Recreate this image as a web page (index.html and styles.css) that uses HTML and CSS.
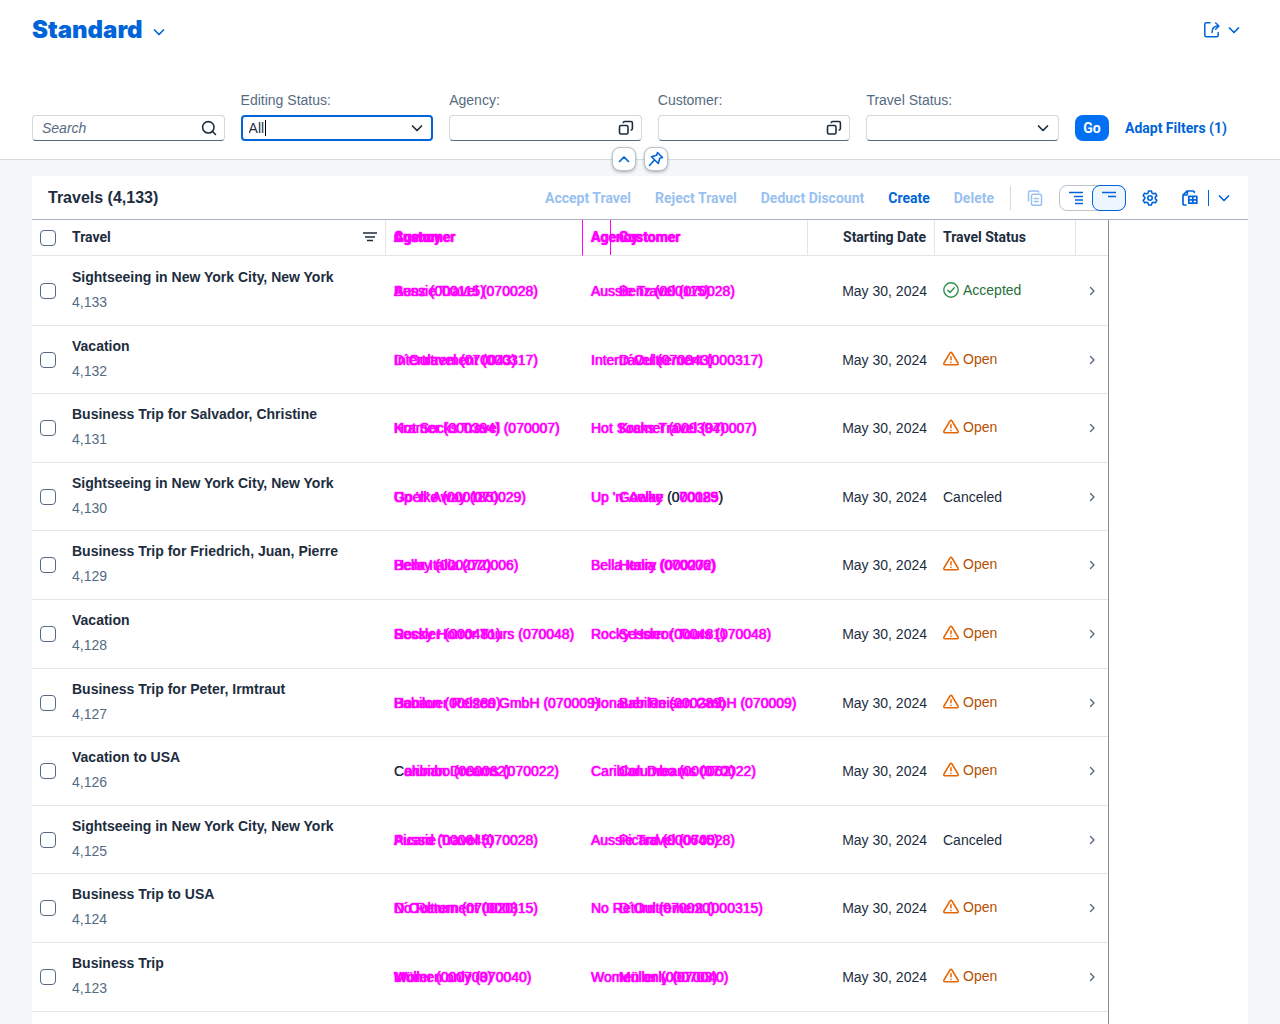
FILE: index.html
```html
<!DOCTYPE html>
<html lang="en">
<head>
<meta charset="utf-8">
<title>Travels</title>
<link rel="stylesheet" href="styles.css">
</head>
<body>
<svg class="sprite" aria-hidden="true">
  <symbol id="down" viewBox="0 0 16 16"><path d="M3.5 6 8 10.5 12.500 6" fill="none" stroke="currentColor" stroke-width="1.700" stroke-linecap="round" stroke-linejoin="round"/></symbol>
  <symbol id="up" viewBox="0 0 16 16"><path d="M3.500 10.500 8 6l4.500 4.500" fill="none" stroke="currentColor" stroke-width="1.700" stroke-linecap="round" stroke-linejoin="round"/></symbol>
  <symbol id="right" viewBox="0 0 16 16"><path d="m6.500 4.500 3.500 3.500-3.500 3.500" fill="none" stroke="currentColor" stroke-width="1.400" stroke-linecap="round" stroke-linejoin="round"/></symbol>
  <symbol id="search" viewBox="0 0 16 16"><g fill="none" stroke="currentColor" stroke-width="1.600" stroke-linecap="round"><circle cx="7.300" cy="7.300" r="5.700"/><path d="m11.500 11.500 3 3"/></g></symbol>
  <symbol id="valuehelp" viewBox="0 0 16 16"><g fill="none" stroke="currentColor" stroke-width="1.600" stroke-linecap="round" stroke-linejoin="round"><rect x="1.500" y="5.500" width="8.500" height="8.500" rx="1.500"/><path d="M5.300 2.500q.3-1 1.300-1h6.300q1.500 0 1.500 1.500v5.500q0 1.300-1.200 1.500"/></g></symbol>
  <symbol id="share" viewBox="0 0 16 16"><g fill="none" stroke="currentColor" stroke-width="1.500" stroke-linecap="round" stroke-linejoin="round"><path d="M6 .8H2.300Q.8.800.8 2.300v10.900q0 1.500 1.500 1.500h10.400q1.500 0 1.500-1.500V10.500"/><path d="M8 10.500c0-3.500 1.500-6.500 6.500-6.500M11.700 1l3.200 3-3.200 3.200"/></g></symbol>
  <symbol id="pin" viewBox="0 0 16 16"><path d="m9.500 1.500 5 5-2.700.8-1.500 5.200-6.800-6.800 5.200-1.500zM6 9.500l-4.500 5" fill="none" stroke="currentColor" stroke-width="1.600" stroke-linecap="round" stroke-linejoin="round"/></symbol>
  <symbol id="copy" viewBox="0 0 16 16"><g fill="none" stroke="currentColor" stroke-width="1.500" stroke-linecap="round" stroke-linejoin="round"><path d="M1.500 11V2.500q0-1.500 1.500-1.500h7.500q1 0 1.200 1"/><rect x="4.500" y="4.200" width="10" height="11" rx="1.800"/><path d="M7.200 8.500h4M7.200 11.500h4"/></g></symbol>
  <symbol id="expand" viewBox="0 0 16 16"><path d="M1 2.500h14M6 6.500h9M7 10h8M7 13.500h8" fill="none" stroke="currentColor" stroke-width="1.600"/></symbol>
  <symbol id="collapse" viewBox="0 0 16 16"><path d="M1 2.500h14M7 6.500h8" fill="none" stroke="currentColor" stroke-width="1.600"/></symbol>
  <symbol id="gear" viewBox="0 0 16 16"><g fill="none" stroke="currentColor" stroke-width="1.600" stroke-linejoin="round"><path d="M6.600 1h2.800l.6 2.100 1.300.7 2.100-.6 1.400 2.400L13.300 7.200v1.600l1.500 1.600-1.400 2.400-2.100-.6-1.300.7-.6 2.100H6.600L6 12.900l-1.300-.7-2.100.6-1.400-2.400 1.500-1.600V7.200L1.200 5.600l1.400-2.400 2.100.6L6 3.100z"/><circle cx="8" cy="8" r="2.200"/></g></symbol>
  <symbol id="sheet" viewBox="0 0 16 16"><g fill="none" stroke="currentColor" stroke-width="1.700" stroke-linecap="round" stroke-linejoin="round"><path d="M4 15H2.300q-1.300 0-1.300-1.300V5L5 1h6q1.300 0 1.300 1.300M5.300 1.500V4q0 1-1 1H1.500"/><path d="M6.800 6.300h8v6.900h-8zM10.800 6.300v7M6.800 9.800h8"/></g></symbol>
  <symbol id="filter" viewBox="0 0 16 16"><path d="M1 4h14M3 8h10M5 11.500h6" fill="none" stroke="currentColor" stroke-width="1.600"/></symbol>
  <symbol id="ok" viewBox="0 0 16 16"><g fill="none" stroke="currentColor" stroke-width="1.400" stroke-linecap="round" stroke-linejoin="round"><circle cx="8" cy="8" r="7.200"/><path d="m4.800 8.300 2.200 2.200 4.300-4.700"/></g></symbol>
  <symbol id="warn" viewBox="0 0 16 16"><g fill="none" stroke="currentColor" stroke-width="1.500" stroke-linecap="round" stroke-linejoin="round"><path d="M7 2q1-1.500 2 0l6 10q.7 1.700-1 1.700H2q-1.700 0-1-1.700z"/><path d="M8 5.800v3M8 11.200v.2"/></g></symbol>
</svg>

<header class="page-header">
  <div class="title-bar">
    <h1><button class="variant" type="button">Standard <svg class="icon"><use href="#down"/></svg></button></h1>
    <button class="share" type="button" aria-label="Share"><svg class="icon"><use href="#share"/></svg><svg class="icon"><use href="#down"/></svg></button>
  </div>
  <form class="filters">
    <div class="field">
      <div class="box"><input type="search" aria-label="Search" placeholder="Search"><svg class="icon"><use href="#search"/></svg></div>
    </div>
    <div class="field">
      <label for="editing">Editing Status:</label>
      <div class="box focused"><select id="editing"><option>All</option></select><span class="caret"></span><svg class="icon"><use href="#down"/></svg></div>
    </div>
    <div class="field">
      <label for="agency">Agency:</label>
      <div class="box"><input id="agency" type="text"><svg class="icon"><use href="#valuehelp"/></svg></div>
    </div>
    <div class="field">
      <label for="customer">Customer:</label>
      <div class="box"><input id="customer" type="text"><svg class="icon"><use href="#valuehelp"/></svg></div>
    </div>
    <div class="field">
      <label for="status">Travel Status:</label>
      <div class="box"><select id="status"><option></option></select><svg class="icon"><use href="#down"/></svg></div>
    </div>
    <div class="filter-actions">
      <button class="go" type="button">Go</button>
      <button class="adapt" type="button">Adapt Filters (1)</button>
    </div>
  </form>
  <div class="header-toggles">
    <button type="button" aria-label="Collapse header"><svg class="icon"><use href="#up"/></svg></button>
    <button type="button" aria-label="Pin header"><svg class="icon"><use href="#pin"/></svg></button>
  </div>
</header>

<main class="panel">
  <div class="toolbar">
    <h2>Travels (4,133)</h2>
    <button type="button" disabled>Accept Travel</button>
    <button type="button" disabled>Reject Travel</button>
    <button type="button" disabled>Deduct Discount</button>
    <button type="button">Create</button>
    <button type="button" disabled>Delete</button>
    <span class="separator"></span>
    <button type="button" disabled aria-label="Copy"><svg class="icon"><use href="#copy"/></svg></button>
    <div class="segmented">
      <button type="button" aria-label="Show more"><svg class="icon"><use href="#expand"/></svg></button>
      <button class="selected" type="button" aria-label="Show less"><svg class="icon"><use href="#collapse"/></svg></button>
    </div>
    <button class="settings" type="button" aria-label="Settings"><svg class="icon"><use href="#gear"/></svg></button>
    <div class="export">
      <button type="button" aria-label="Export"><svg class="icon"><use href="#sheet"/></svg></button>
      <button type="button" aria-label="Export options"><svg class="icon"><use href="#down"/></svg></button>
    </div>
  </div>
  <div class="table-area">
    <table>
      <colgroup><col class="c-check"><col class="c-travel"><col class="c-first"><col class="c-second"><col class="c-date"><col class="c-status"><col class="c-nav"></colgroup>
      <thead>
        <tr>
          <th><input type="checkbox" aria-label="Select all"></th>
          <th><div class="head-travel">Travel <svg class="icon"><use href="#filter"/></svg></div></th>
          <th class="mark-edge"><div class="stack"><span>Agency</span><span>Customer</span></div></th>
          <th class="mark-line"><div class="stack shifted"><span>Agency</span><span>Customer</span></div></th>
          <th class="date">Starting Date</th>
          <th>Travel Status</th>
          <th></th>
        </tr>
      </thead>
      <tbody id="rows"></tbody>
    </table>
  </div>
</main>
<script src="app.js"></script>
</body>
</html>
```

FILE: styles.css
```css
* { box-sizing: border-box; }

body {
  margin: 0;
  height: 100vh;
  overflow: hidden;
  display: flex;
  flex-direction: column;
  background: #f5f6f7;
  color: #1d2d3e;
  font: 14px/20px "Liberation Sans", Arial, sans-serif;
}

.sprite { display: none; }
.icon { width: 16px; height: 16px; flex: none; display: block; }

button, input, select { font: inherit; color: inherit; }
button {
  border: 0;
  padding: 0;
  background: none;
  color: #0064d9;
  font-family: Roboto, sans-serif;
  font-weight: 700;
}
button:disabled { color: #99c1f0; }

/* Header */
.page-header {
  position: relative;
  flex: none;
  height: 160px;
  padding: 14px 32px 0;
  background: #fff;
  border-bottom: 1px solid #d9d9d9;
}
.title-bar {
  display: flex;
  justify-content: space-between;
  align-items: center;
  height: 32px;
}
h1 { margin: 0; }
.variant {
  display: flex;
  align-items: center;
  gap: 8px;
  font: 900 24px/32px Inter, sans-serif;
}
.variant .icon { margin-top: 4px; }
.share { display: flex; gap: 6px; margin-right: 6px; }

.filters {
  display: grid;
  grid-template-columns: repeat(5, 1fr) 173px;
  column-gap: 16px;
  align-items: end;
  margin-top: 44px;
}
.field label { display: block; color: #556b82; margin-bottom: 5px; }
.box { position: relative; }
.box input, .box select {
  display: block;
  appearance: none;
  width: 100%;
  height: 26px;
  padding: 0 32px 0 9px;
  border: 1px solid #d3d7dc;
  border-bottom-color: #556b82;
  border-radius: 4px;
  background: #fff;
  outline: none;
}
.box input::placeholder { color: #556b82; font-style: italic; opacity: 1; }
.box .icon { position: absolute; right: 8px; top: 5px; pointer-events: none; }
.box.focused select { border: 2px solid #0064d9; padding-left: 6px; }
.caret { position: absolute; left: 24px; top: 5px; width: 1px; height: 16px; background: #000; }

.filter-actions { display: flex; gap: 16px; }
.go {
  width: 34px;
  height: 26px;
  border-radius: 8px;
  background: #0070f2;
  color: #fff;
}
.adapt { white-space: nowrap; }

.header-toggles {
  position: absolute;
  left: 0;
  right: 0;
  bottom: -12px;
  display: flex;
  justify-content: center;
  gap: 8px;
}
.header-toggles button {
  display: grid;
  place-items: center;
  width: 24px;
  height: 24px;
  border: 1px solid #bcc3ca;
  border-radius: 8px;
  background: #fff;
  box-shadow: 0 1px 3px #5b738b88;
}

/* Table panel */
.panel {
  flex: 1;
  min-height: 0;
  display: flex;
  flex-direction: column;
  margin: 16px 32px 0;
  background: #fff;
}
.toolbar {
  flex: none;
  display: flex;
  align-items: center;
  gap: 24px;
  height: 44px;
  padding: 0 16px;
  border-bottom: 1px solid #a8b3bd;
}
h2 { margin: 0 auto 0 0; font-size: 16px; line-height: 20px; }
.separator { width: 1px; height: 24px; margin: 0 -8px; background: #d3d7dc; }
.segmented {
  display: flex;
  width: 67px;
  height: 26px;
  margin: 0 -8px;
  border: 1px solid #bcc3ca;
  border-radius: 8px;
}
.segmented button { flex: 1; display: grid; place-items: center; }
.segmented .selected {
  margin: -1px;
  border: 1px solid #0064d9;
  border-radius: 8px;
  background: #edf6ff;
}
.export { display: flex; align-items: center; }
.export button + button { margin-left: 10px; padding-left: 7px; border-left: 1px solid #0064d9; }

.table-area { flex: 1; width: 1077px; border-right: 1px solid #8c8f94; }
table { width: 100%; table-layout: fixed; border-collapse: separate; border-spacing: 0; }
.c-check { width: 40px; }
.c-travel { width: 314px; }
.c-first { width: 197px; }
.c-second { width: 225px; }
.c-date { width: 127px; }
.c-status { width: 141px; }

th, td { padding: 0; text-align: left; border-bottom: 1px solid #e5e5e5; }
th {
  height: 36px;
  padding-bottom: 2px;
  border-right: 1px solid #e5e5e5;
  font-family: Roboto, sans-serif;
}
th:nth-child(1), th:nth-child(7) { border-right: 0; }
th:nth-child(n+3), td:nth-child(n+3) { padding-left: 8px; }
th.date, td.date { padding-right: 8px; text-align: right; }
.head-travel { display: flex; justify-content: space-between; align-items: center; padding-right: 7px; }

tbody tr { height: 69px; }
tbody tr:first-child { height: 70px; }
tbody tr:nth-child(5n+2), tbody tr:nth-child(5n+4) { height: 68px; }

input[type="checkbox"] {
  display: block;
  appearance: none;
  width: 16px;
  height: 16px;
  margin: 0 0 0 8px;
  border: 1px solid #556b82;
  border-radius: 4px;
  background: #fff;
}
th input[type="checkbox"] { margin-top: 3px; }

.travel { display: flex; flex-direction: column; gap: 5px; padding-bottom: 3px; }
.travel span { color: #556b82; }

/* Two versions of a column drawn over each other, changes marked in magenta */
.stack {
  display: grid;
  color: #f0f;
  white-space: nowrap;
  text-shadow: 0 0 1px #f0f, 0 0 1px #f0f;
}
.stack > span { grid-area: 1 / 1; }
.stack.shifted > span:last-child { margin-left: 28px; }
.same { color: #1d2d3e; text-shadow: none; }
th.mark-edge { border-right-color: #f0f; }
th.mark-line { background: linear-gradient(#f0f, #f0f) 27px 0 / 1px 100% no-repeat; }

.status { display: flex; align-items: center; gap: 4px; padding-bottom: 2px; }
.status.canceled { padding-bottom: 0; }
.status.open { color: #b44f00; }
.status.open .icon { color: #e76500; }
.status.accepted { color: #256f3a; }
.status.accepted .icon { color: #30914c; }
td .nav { color: #556b82; }
```

FILE: app.js
```js
const travels = [
  ["Sightseeing in New York City, New York", "4,133", "Aussie Travel (070028)", "Benz (000115)", "Accepted"],
  ["Vacation", "4,132", "Intertravel (070043)", "D´Oultrement (000317)", "Open"],
  ["Business Trip for Salvador, Christine", "4,131", "Hot Socks Travel (070007)", "Kramer (000394)", "Open"],
  ["Sightseeing in New York City, New York", "4,130", "Up 'n' Away (070029)", "Goelke (000185)", "Canceled"],
  ["Business Trip for Friedrich, Juan, Pierre", "4,129", "Bella Italia (070006)", "Henry (000272)", "Open"],
  ["Vacation", "4,128", "Rocky Horror Tours (070048)", "Sessler (000481)", "Open"],
  ["Business Trip for Peter, Irmtraut", "4,127", "Honauer Reisen GmbH (070009)", "Babilon (000289)", "Open"],
  ["Vacation to USA", "4,126", "Caribian Dreams (070022)", "Columbo (000062)", "Open"],
  ["Sightseeing in New York City, New York", "4,125", "Aussie Travel (070028)", "Picard (000645)", "Canceled"],
  ["Business Trip to USA", "4,124", "No Return (070020)", "D´Oultrement (000315)", "Open"],
  ["Business Trip", "4,123", "Women only (070040)", "Müller (000703)", "Open"]
];
const icons = { Accepted: "ok", Open: "warn" };
const icon = id => `<svg class="icon"><use href="#${id}"/></svg>`;
const same = text => `<span class="same">${text}</span>`;

const unmarkedStart = text => text[0] === "C" ? same("C") + text.slice(1) : text;
const unmarkedEnd = (text, id) => id === "4,130"
  ? text.replace(/\(0/, same("(0")).replace(/\)$/, same(")"))
  : text;

document.getElementById("rows").innerHTML = travels.map(([name, id, agency, customer, status]) => `
  <tr>
    <td><input type="checkbox" aria-label="Select ${id}"></td>
    <td><div class="travel"><strong>${name}</strong><span>${id}</span></div></td>
    <td><div class="stack"><span>${unmarkedStart(agency)}</span><span>${unmarkedStart(customer)}</span></div></td>
    <td><div class="stack shifted"><span>${unmarkedEnd(agency, id)}</span><span>${unmarkedEnd(customer, id)}</span></div></td>
    <td class="date">May 30, 2024</td>
    <td><div class="status ${status.toLowerCase()}">${icons[status] ? icon(icons[status]) : ""}${status}</div></td>
    <td><div class="nav">${icon("right")}</div></td>
  </tr>`).join("");
```
